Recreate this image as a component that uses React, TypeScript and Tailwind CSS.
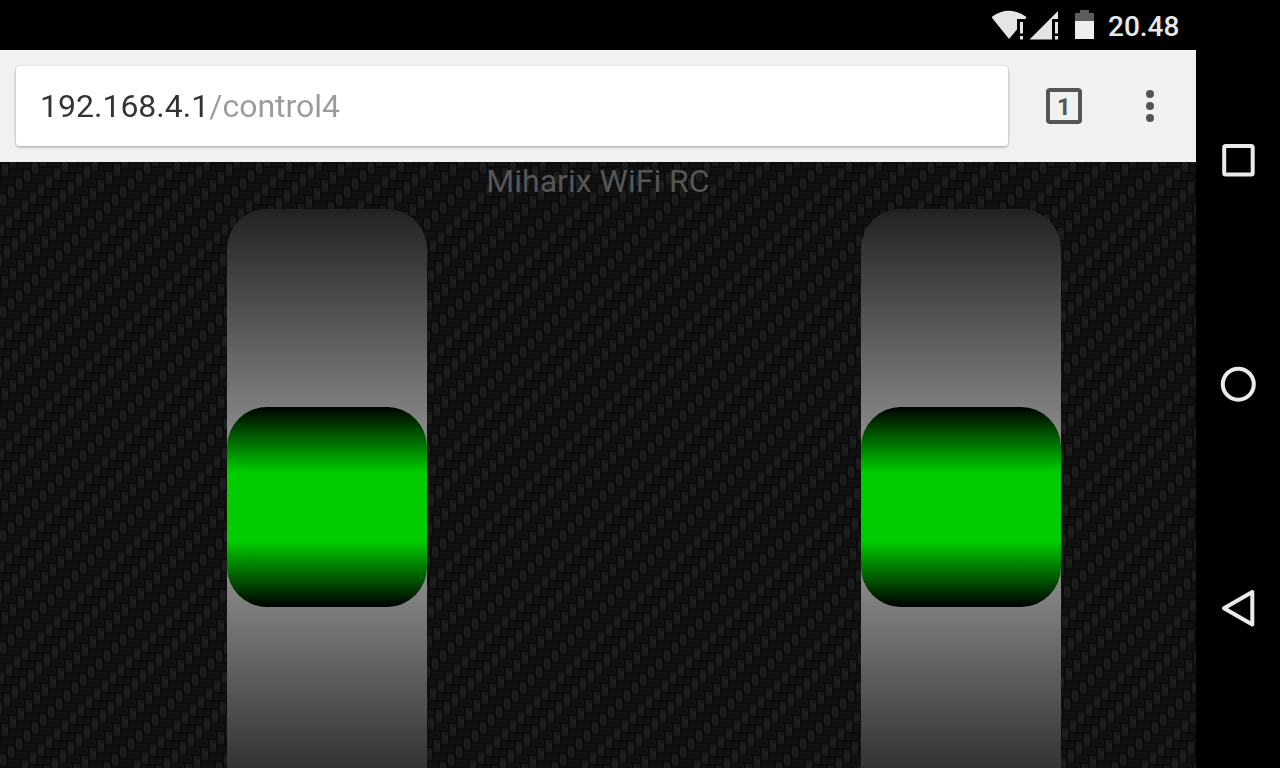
import { useState } from "react";

const TILE = 112;

// The weave repeats on a skewed lattice that closes on itself every 112 pixels.
const weave: { x: number; y: number }[] = [];
for (let m = -8; m <= 24; m++) {
  for (let n = -6; n <= 12; n++) {
    const x = 1 - 8 * m + 30 * n;
    const y = 1 + 8 * m - 2 * n;
    if (x > -24 && x < TILE && y > -15 && y < TILE) weave.push({ x, y });
  }
}

function CarbonFibre() {
  return (
    <svg className="[grid-area:1/1] h-full w-full" aria-hidden="true">
      <defs>
        <linearGradient id="warp" x1="0" y1="0" x2="0" y2="1">
          <stop offset="0" stopColor="#171718" />
          <stop offset="0.4" stopColor="#1e1e20" />
          <stop offset="1" stopColor="#171718" />
        </linearGradient>
        <pattern id="carbon" width={TILE} height={TILE} patternUnits="userSpaceOnUse">
          <rect width={TILE} height={TILE} fill="#0c0c0c" />
          {weave.map(({ x, y }) => (
            <g key={`${x}:${y}`}>
              <rect x={x + 1} y={y + 1} width="6" height="12" rx="1" fill="url(#warp)" />
              <rect x={x + 9} y={y + 7} width="12" height="6" rx="1" fill="#111111" />
            </g>
          ))}
        </pattern>
      </defs>
      <rect width="100%" height="100%" fill="url(#carbon)" />
    </svg>
  );
}

function StatusBar() {
  return (
    <header className="flex h-[50px] items-center justify-end bg-black pr-4">
      <svg width="104" height="50" viewBox="0 0 104 50" aria-hidden="true">
        <path d="M-0.500 17Q17 4.500 34.500 17L33.500 19H25V29.500L17 39Z" fill="#e5e5e5" />
        <path d="M28 22h3v11.500h-3zM28 36h3v3.500h-3z" fill="#e5e5e5" />
        <path d="M66 11V19H60V39.500H37.500Z" fill="#e5e5e5" />
        <path d="M63 22h3v11.500h-3zM63 36h3v3.500h-3z" fill="#e5e5e5" />
        <path d="M83 13h5v-3h9v3h5v8.500H83z" fill="#5c5c5c" />
        <path d="M83 21h19v18H83z" fill="#eeeeee" />
      </svg>
      <time className="ml-3 w-[72px] pt-1 text-[28px] leading-8 font-medium text-[#e8e8e8]">20.48</time>
    </header>
  );
}

function Toolbar() {
  const [url, setUrl] = useState("192.168.4.1/control4");
  return (
    <div className="flex h-28 items-center bg-[#f1f1f1] pl-4">
      <div className="flex h-20 min-w-0 flex-1 items-center rounded bg-white px-6 shadow-[0_1px_3px_rgba(0,0,0,0.35)]">
        <input
          aria-label="Address"
          value={url}
          onChange={(e) => setUrl(e.target.value)}
          spellCheck={false}
          className="h-12 w-full bg-[linear-gradient(90deg,#333333_168px,#9b9b9b_168px)] bg-clip-text text-[32px] text-transparent caret-[#333333] outline-none"
        />
      </div>
      <button
        aria-label="Open tabs"
        className="ml-[38px] flex size-9 items-center justify-center rounded border-4 border-[#555555] pt-0.5 text-2xl leading-none font-bold text-[#555555]"
      >
        1
      </button>
      <button aria-label="Menu" className="mr-[22px] ml-11 flex h-12 w-12 items-center justify-center">
        <svg width="8" height="32" viewBox="0 0 8 32" fill="#555555" aria-hidden="true">
          <circle cx="4" cy="4" r="4" />
          <circle cx="4" cy="16" r="4" />
          <circle cx="4" cy="28" r="4" />
        </svg>
      </button>
    </div>
  );
}

function Throttle({ label }: { label: string }) {
  return (
    <input
      type="range"
      aria-label={label}
      min={0}
      max={100}
      defaultValue={50}
      className="m-0 block h-[596px] w-[200px] shrink-0 appearance-none rounded-[40px] bg-[linear-gradient(#222222,#aaaaaa,#222222)] [writing-mode:vertical-lr] [&::-webkit-slider-thumb]:h-[200px] [&::-webkit-slider-thumb]:w-[200px] [&::-webkit-slider-thumb]:appearance-none [&::-webkit-slider-thumb]:rounded-[40px] [&::-webkit-slider-thumb]:bg-[linear-gradient(#000000,#00cc00_33%,#00cc00_67%,#000000)]"
    />
  );
}

function SystemNav() {
  return (
    <nav className="flex w-[84px] shrink-0 flex-col justify-center bg-black" aria-label="System">
      <button aria-label="Recent apps" className="flex h-56 items-center justify-center">
        <svg width="40" height="40" viewBox="0 0 40 40" fill="none" stroke="#ebebeb" strokeWidth="4" aria-hidden="true">
          <rect x="6.200" y="6" width="28.500" height="28.500" rx="1.500" />
        </svg>
      </button>
      <button aria-label="Home" className="flex h-56 items-center justify-center">
        <svg width="40" height="40" viewBox="0 0 40 40" fill="none" stroke="#ebebeb" strokeWidth="4" aria-hidden="true">
          <circle cx="20.300" cy="20.200" r="15.500" />
        </svg>
      </button>
      <button aria-label="Back" className="flex h-56 items-center justify-center">
        <svg width="40" height="40" viewBox="0 0 40 40" fill="none" stroke="#ebebeb" strokeWidth="4" strokeLinejoin="round" aria-hidden="true">
          <path d="M6 20.200L34.300 4V36.500Z" />
        </svg>
      </button>
    </nav>
  );
}

export default function App() {
  return (
    <div className="flex h-screen overflow-hidden bg-black font-['Roboto',sans-serif]">
      <div className="flex min-w-0 flex-1 flex-col">
        <StatusBar />
        <Toolbar />
        <main className="grid min-h-0 flex-1 grid-cols-1 overflow-hidden">
          <CarbonFibre />
          <div className="[grid-area:1/1]">
            <h1 className="h-[47px] text-center text-[32px] leading-[38px] font-normal text-[#555555]">Miharix WiFi RC</h1>
            <div className="flex justify-between pr-[11.3%] pl-[19%]">
              <Throttle label="Left channel" />
              <Throttle label="Right channel" />
            </div>
          </div>
        </main>
      </div>
      <SystemNav />
    </div>
  );
}
